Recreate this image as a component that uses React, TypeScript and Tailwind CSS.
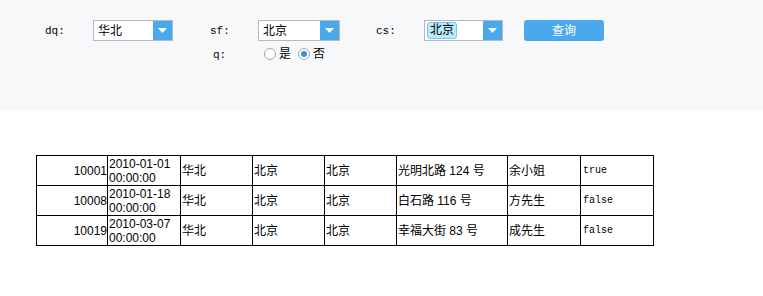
import React from "react";

const cjk = { fontFamily: '"Liberation Sans", "Noto Sans CJK SC", sans-serif' };
const mono = { fontFamily: '"Liberation Mono", "DejaVu Sans Mono", monospace' };

function Select({ value, w, highlight }: { value: string; w: string; highlight?: boolean }) {
  return (
    <div className={`flex h-[21px] ${w} border border-[#b4b8c8] bg-white`}>
      <div className="flex-1 flex items-center pl-[2px] text-[12px] text-black" style={cjk}>
        {highlight ? (
          <span className="bg-[#b9ecfb] border border-[#7fc6ee] rounded-[3px] px-[2px] leading-[15px]">{value}</span>
        ) : (
          <span className="pl-[2px]">{value}</span>
        )}
      </div>
      <div className="w-[19px] bg-[#4aa8ec] flex items-center justify-center">
        <svg width="9" height="5" viewBox="0 0 9 5">
          <path d="M0 0 L9 0 L4.5 5 Z" fill="white" />
        </svg>
      </div>
    </div>
  );
}

function Radio({ checked }: { checked?: boolean }) {
  return (
    <span className="w-[12px] h-[12px] rounded-full border border-[#a8a8a8] bg-white flex items-center justify-center">
      {checked && <span className="w-[6px] h-[6px] rounded-full bg-[#3d8ff0]" />}
    </span>
  );
}

const rows = [
  ["10001", "2010-01-01", "华北", "北京", "北京", "光明北路 124 号", "余小姐", "true"],
  ["10008", "2010-01-18", "华北", "北京", "北京", "白石路 116 号", "方先生", "false"],
  ["10019", "2010-03-07", "华北", "北京", "北京", "幸福大街 83 号", "成先生", "false"],
];

export default function App() {
  return (
    <div className="w-[763px] h-[296px] bg-white">
      <div className="h-[110px] bg-[#f7f8fa] pt-[20px] pl-[45px]">
        <div className="flex items-center h-[21px]">
          <span className="w-[48px] text-[11px] text-black pt-[1px]" style={mono}>dq:</span>
          <Select value="华北" w="w-[80px]" />
          <span className="ml-[37px] w-[48px] text-[11px] text-black pt-[1px]" style={mono}>sf:</span>
          <Select value="北京" w="w-[82px]" />
          <span className="ml-[36px] w-[48px] text-[11px] text-black pt-[1px]" style={mono}>cs:</span>
          <Select value="北京" w="w-[79px]" highlight />
          <button
            className="ml-[21px] w-[80px] h-[21px] rounded-[3px] bg-[#4aa8ec] text-white text-[12px]"
            style={cjk}
          >
            查询
          </button>
        </div>
        <div className="flex items-center h-[14px] mt-[6px]">
          <span className="ml-[168px] w-[51px] text-[11px] text-black pt-[3px]" style={mono}>q:</span>
          <Radio />
          <span className="ml-[3px] text-[12px] text-black" style={cjk}>是</span>
          <span className="ml-[7px]"><Radio checked /></span>
          <span className="ml-[3px] text-[12px] text-black" style={cjk}>否</span>
        </div>
      </div>
      <div className="pt-[45px] pl-[36px]">
        <table className="table-fixed border-collapse border border-black w-[617px]" style={cjk}>
          <colgroup>
            <col className="w-[71px]" />
            <col className="w-[73px]" />
            <col className="w-[72px]" />
            <col className="w-[72px]" />
            <col className="w-[72px]" />
            <col className="w-[111px]" />
            <col className="w-[73px]" />
            <col className="w-[73px]" />
          </colgroup>
          <tbody>
            {rows.map((r) => (
              <tr key={r[0]} className="h-[30px]">
                <td className="border border-black text-right text-[12px] pr-0 align-middle">{r[0]}</td>
                <td className="border border-black text-[12px] leading-[14px] pl-[1px] align-middle">
                  <div>{r[1]}</div>
                  <div>00:00:00</div>
                </td>
                <td className="border border-black text-[12px] pl-[1px]">{r[2]}</td>
                <td className="border border-black text-[12px] pl-[1px]">{r[3]}</td>
                <td className="border border-black text-[12px] pl-[1px]">{r[4]}</td>
                <td className="border border-black text-[12px] pl-[1px]">{r[5]}</td>
                <td className="border border-black text-[12px] pl-[1px]">{r[6]}</td>
                <td className="border border-black text-[10px] pl-[2px]" style={mono}>{r[7]}</td>
              </tr>
            ))}
          </tbody>
        </table>
      </div>
    </div>
  );
}
